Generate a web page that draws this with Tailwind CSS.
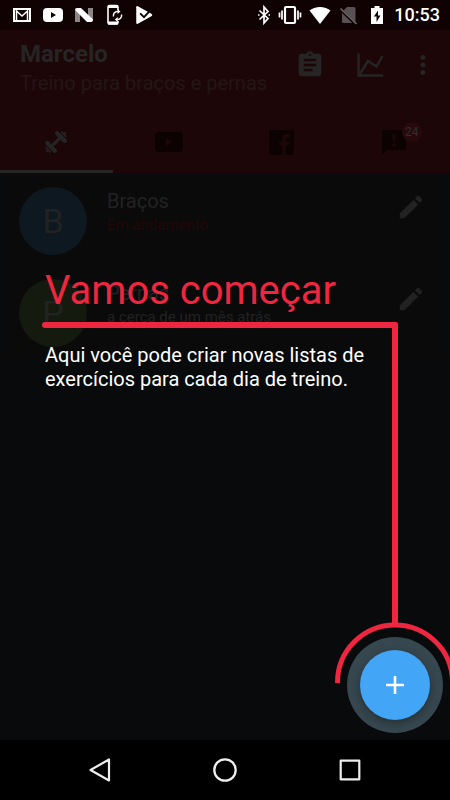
<!DOCTYPE html>
<html lang="pt-BR">
<head>
<meta charset="utf-8">
<meta name="viewport" content="width=device-width, initial-scale=1">
<title>Marcelo - Treino para braços e pernas</title>
<script src="https://cdn.jsdelivr.net/npm/@tailwindcss/browser@4"></script>
</head>
<body class="bg-black font-['Roboto','Noto_Sans',sans-serif]">
<div class="relative flex h-screen min-h-[640px] flex-col overflow-hidden bg-[#080a0c]">

  <!-- Status bar -->
  <div class="flex h-[30px] shrink-0 items-center justify-between bg-[#100102] pl-[12px] pr-[10px] text-white">
    <div class="flex items-center gap-[10px]">
      <svg class="h-[16px] w-[20px]" viewBox="0 0 20 16" fill="none" stroke="currentColor"><rect x="2" y="2" width="16" height="12" stroke-width="2"/><path d="M4.500 14V4L10 9l5.500-5V14" stroke-width="1.500"/></svg>
      <svg class="h-[16px] w-[22px]" viewBox="0 0 22 16" fill="currentColor"><path fill-rule="evenodd" d="M5 1h12q4 0 4 4v6q0 4-4 4H5q-4 0-4-4V5q0-4 4-4Zm4 4v6l5-3Z"/></svg>
      <svg class="h-[16px] w-[20px]" viewBox="0 0 20 16"><path d="M1 15V3l5 3v9ZM14 1h5v13l-5-3Z" fill="#8d8587"/><path d="M1 3q0-2 2-2h4l12 11.500q0 2.500-2 2.500h-4Z" fill="#fff"/></svg>
      <svg class="h-[22px] w-[20px]" viewBox="0 0 20 22" fill="none" stroke="currentColor"><path d="M14 6V3q0-1.500-1.500-1.500h-7Q4 1.500 4 3v15.500Q4 20 5.500 20h7q1.500 0 1.500-1.500V17" stroke-width="1.600"/><path d="M4 2.500h10M4 19h10" stroke-width="3"/><path d="M9.500 12.500A4 4 0 0 1 14 7.500M17.500 10.500a4 4 0 0 1-4 5" stroke-width="1.500"/><path d="M13.500 5v5l3-2.500ZM13.800 13v5l-3-2.500Z" fill="currentColor" stroke="none"/></svg>
      <svg class="h-[20px] w-[20px]" viewBox="0 0 18 18"><path d="M2 2q0-1.500 1.500-.8L16 8.200q1 .8 0 1.600L3.500 16.800Q2 17.500 2 16Z" fill="#fff"/><path d="M5.500 7.500l3.500 3.500L16 3.500" fill="none" stroke="#100102" stroke-width="1.700"/></svg>
    </div>
    <div class="flex items-center gap-[7px]">
      <svg class="h-[20px] w-[14px]" viewBox="0 0 14 20" fill="none" stroke="currentColor" stroke-width="1.700"><path d="M2.500 5.500l8.500 8-4 4.500V2l4 4.500-8.500 8M1 10h1.500M11.500 10H13"/></svg>
      <svg class="h-[20px] w-[24px]" viewBox="0 0 24 20" fill="none" stroke="currentColor"><rect x="7" y="2" width="10" height="16" rx="1" stroke-width="2.200"/><path d="M4 5.500v9M20 5.500v9M1.500 7.500v5M22.500 7.500v5" stroke-width="1.700"/></svg>
      <svg class="h-[20px] w-[22px]" viewBox="0 0 22 20" fill="currentColor"><path d="M11 19 .5 5.500Q5 2 11 2t10.500 3.500Z"/></svg>
      <svg class="h-[20px] w-[20px]" viewBox="0 0 20 20"><path d="M9 2h7q1.500 0 1.500 1.500v13q0 1.500-1.500 1.500H5.500Q4 18 4 16.500V7Z" fill="#585052"/><path d="M1.500 3.500 18 19.500" stroke="#100102" stroke-width="3"/><path d="M2.500 3.500 18.500 19" stroke="#70686a" stroke-width="1.600"/></svg>
      <svg class="ml-[5px] h-[20px] w-[14px]" viewBox="0 0 14 20" fill="currentColor"><path fill-rule="evenodd" d="M4.500 1h5v2h3.500v16H1V3h3.500ZM8 5.500 3.800 11.500H6.500V17l4-6.500H8Z"/></svg>
      <span class="ml-[3px] text-lg leading-[30px] font-medium">10:53</span>
    </div>
  </div>

  <!-- App bar with tabs -->
  <header class="shrink-0 bg-[#1d0607] text-[#252525]">
    <div class="flex h-[82px] items-start justify-between pt-[10px] pr-[4px] pl-[20px]">
      <div class="flex flex-col gap-[3px]">
        <h1 class="text-2xl leading-[28px] font-bold">Marcelo</h1>
        <p class="text-xl leading-[24px] whitespace-nowrap text-[#231616]">Treino para braços e pernas</p>
      </div>
      <div class="flex items-center pt-[10px]">
        <button type="button" aria-label="Planilha" class="flex w-[60px] justify-center"><svg class="h-[30px] w-[30px]" viewBox="0 0 24 24" fill="currentColor"><path d="M19 3h-4.180C14.400 1.840 13.300 1 12 1c-1.300 0-2.400.84-2.820 2H5c-1.100 0-2 .9-2 2v14c0 1.100.9 2 2 2h14c1.100 0 2-.9 2-2V5c0-1.100-.9-2-2-2zm-7 0c.55 0 1 .45 1 1s-.45 1-1 1-1-.45-1-1 .45-1 1-1zm2 14H7v-2h7v2zm3-4H7v-2h10v2zm0-4H7V7h10v2z"/></svg></button>
        <button type="button" aria-label="Gráfico" class="flex w-[60px] justify-center"><svg class="h-[30px] w-[30px]" viewBox="0 0 30 30" fill="none" stroke="currentColor" stroke-width="2.500"><path d="M3.500 3.500v22H28"/><path d="M4.500 24.500 13 11l8.500 5.500L27.500 6"/></svg></button>
        <button type="button" aria-label="Mais opções" class="flex w-[46px] justify-center"><svg class="h-[30px] w-[30px]" viewBox="0 0 24 24" fill="currentColor"><path d="M12 8c1.100 0 2-.9 2-2s-.9-2-2-2-2 .9-2 2 .9 2 2 2zm0 2c-1.100 0-2 .9-2 2s.9 2 2 2 2-.9 2-2-.9-2-2-2zm0 6c-1.100 0-2 .9-2 2s.9 2 2 2 2-.9 2-2-.9-2-2-2z"/></svg></button>
      </div>
    </div>
    <nav class="grid h-[61px] grid-cols-4 text-[#0c0202]">
      <button type="button" aria-label="Treinos" class="flex items-center justify-center border-b-[3px] border-[#252525] text-[#252525]">
        <svg class="mt-[2px] h-[26px] w-[26px]" viewBox="0 0 26 26" fill="none" stroke="currentColor" stroke-linecap="round"><g transform="rotate(-45 13 13)"><path d="M7 13h12" stroke-width="3.200" stroke-linecap="butt"/><path d="M6 7.700v10.600M20 7.700v10.600" stroke-width="4.400"/><path d="M2 10v6M24 10v6" stroke-width="1.700"/><path d="M-.5 13h2M24.500 13h2" stroke-width="2" stroke-linecap="butt"/></g></svg>
      </button>
      <button type="button" aria-label="Vídeos" class="flex items-center justify-center border-b-[3px] border-transparent">
        <svg class="mt-[2px] h-[20px] w-[28px]" viewBox="0 0 28 20" fill="currentColor"><path fill-rule="evenodd" d="M4 0h20q4 0 4 4v12q0 4-4 4H4q-4 0-4-4V4q0-4 4-4Zm7 6v8l7-4Z"/></svg>
      </button>
      <button type="button" aria-label="Facebook" class="flex items-center justify-center border-b-[3px] border-transparent">
        <svg class="mt-[2px] h-[25px] w-[25px]" viewBox="0 0 25 25"><rect width="25" height="25" rx="2" fill="currentColor"/><path d="M13.200 25v-9.500H10v-3.700h3.200V9q0-4.800 4.800-4.800h3V8h-2.300q-1.800 0-1.800 1.800v2h4l-.5 3.700h-3.500V25Z" fill="#1d0607"/></svg>
      </button>
      <button type="button" aria-label="Avisos, 24 novos" class="flex items-center justify-center border-b-[3px] border-transparent">
        <span class="relative mt-[2px]">
          <svg class="h-[26px] w-[26px]" viewBox="0 0 26 26"><path d="M2.500 1h21Q25 1 25 2.500v17q0 1.500-1.500 1.500H6l-5 5V2.500Q1 1 2.500 1Z" fill="currentColor"/><path d="M13 5v7M13 14.500v3" stroke="#1d0607" stroke-width="3"/></svg>
          <span class="absolute -top-[7px] left-[21px] flex size-[20px] items-center justify-center rounded-full bg-[#27090b] text-xs leading-none text-[#2f2e2e]">24</span>
        </span>
      </button>
    </nav>
  </header>

  <!-- Workout lists -->
  <main class="flex-1 px-[4px] pt-[2px]">
    <ul class="text-[#222222]">
      <li class="flex h-[92px] items-center bg-[#0a0a0a] pr-[20px] pl-[15px]">
        <span class="flex size-[68px] shrink-0 items-center justify-center rounded-full bg-[#0e1820] text-[34px] leading-none">B</span>
        <div class="ml-[20px] flex h-full flex-1 flex-col gap-[3px] pt-[14px]">
          <h2 class="text-xl leading-[24px]">Braços</h2>
          <p class="text-[15px] leading-[18px] text-[#240607]">Em andamento</p>
        </div>
        <button type="button" aria-label="Editar Braços" class="mb-[28px]"><svg class="size-[30px]" viewBox="0 0 24 24" fill="currentColor"><path d="M3 17.250V21h3.750L17.810 9.940l-3.750-3.750L3 17.250zM20.710 7.040c.39-.39.39-1.020 0-1.410l-2.340-2.340c-.39-.39-1.020-.39-1.410 0l-1.830 1.830 3.750 3.750 1.830-1.830z"/></svg></button>
      </li>
      <li class="flex h-[92px] items-center bg-[#0a0a0a] pr-[20px] pl-[15px]">
        <span class="flex size-[68px] shrink-0 items-center justify-center rounded-full bg-[#151a0f] text-[34px] leading-none">P</span>
        <div class="ml-[20px] flex h-full flex-1 flex-col gap-[3px] pt-[14px]">
          <h2 class="text-xl leading-[24px]">Pernas</h2>
          <p class="text-[15px] leading-[18px]">a cerca de um mês atrás</p>
        </div>
        <button type="button" aria-label="Editar Pernas" class="mb-[28px]"><svg class="size-[30px]" viewBox="0 0 24 24" fill="currentColor"><path d="M3 17.250V21h3.750L17.810 9.940l-3.750-3.750L3 17.250zM20.710 7.040c.39-.39.39-1.020 0-1.410l-2.340-2.340c-.39-.39-1.020-.39-1.410 0l-1.830 1.830 3.750 3.750 1.830-1.830z"/></svg></button>
      </li>
    </ul>
  </main>

  <!-- System navigation -->
  <footer class="flex h-[60px] shrink-0 items-center justify-center gap-[99px] bg-black text-[#eeeeee]">
    <button type="button" aria-label="Voltar"><svg class="h-[26px] w-[26px]" viewBox="0 0 26 26" fill="none" stroke="currentColor" stroke-width="2.200" stroke-linejoin="round"><path d="M22 2.500v21L3.500 13Z"/></svg></button>
    <button type="button" aria-label="Início"><svg class="h-[26px] w-[26px]" viewBox="0 0 26 26" fill="none" stroke="currentColor" stroke-width="2.300"><circle cx="13" cy="13" r="10.700"/></svg></button>
    <button type="button" aria-label="Recentes"><svg class="h-[26px] w-[26px]" viewBox="0 0 26 26" fill="none" stroke="currentColor" stroke-width="2.200" stroke-linejoin="round"><rect x="3.700" y="3.700" width="18.600" height="18.600"/></svg></button>
  </footer>

  <!-- Showcase: message, connector line and highlighted action -->
  <section class="absolute inset-x-0 top-[267px] pr-[52px] pl-[42px]">
    <h2 class="pl-[3px] text-[40px] leading-[48px] text-[#ef2640]">Vamos começar</h2>
    <div class="mt-[7px] h-[6px] rounded-full bg-[#ef2640]"></div>
    <p class="mt-[15px] pl-[3px] text-xl leading-[24px] text-white">Aqui você pode criar novas listas de exercícios para cada dia de treino.</p>
  </section>
  <div class="absolute top-[322px] right-[52px] bottom-[173px] w-[6px] rounded-t-sm bg-[#ef2640]"></div>
  <svg class="absolute right-0 bottom-[116px] h-[64px] w-[116px]" viewBox="0 0 116 64" fill="none" stroke="#ef2640" stroke-width="5"><path d="M3.500 63v-.5a57.500 57.500 0 0 1 115 0v.5"/></svg>
  <div class="absolute right-[7px] bottom-[67px] flex size-[96px] items-center justify-center rounded-full bg-[#37474f]">
    <button type="button" aria-label="Criar nova lista" class="flex size-[70px] items-center justify-center rounded-full bg-[#42a5f5] text-white shadow-[0_3px_8px_rgba(0,0,0,0.35)]"><svg class="size-[18px]" viewBox="0 0 18 18" stroke="currentColor" stroke-width="2.600"><path d="M9 0v18M0 9h18"/></svg></button>
  </div>
</div>
</body>
</html>
